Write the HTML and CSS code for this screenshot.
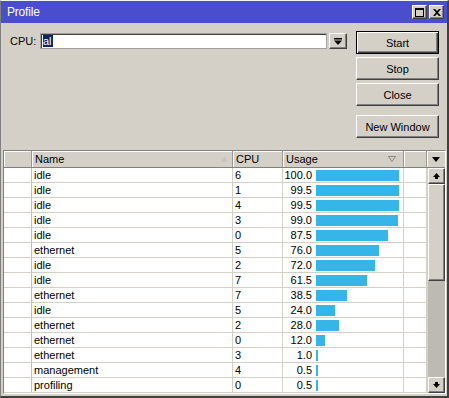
FILE: index.html
```html
<!DOCTYPE html>
<html>
<head>
<meta charset="utf-8">
<title>Profile</title>
<link rel="stylesheet" href="styles.css">
</head>
<body>
<div class="window">
  <div class="titlebar">
    <span class="title">Profile</span>
    <div class="tbtns">
      <span class="tbtn"><svg width="9" height="9" viewBox="0 0 9 9"><rect x="0.5" y="0.5" width="8" height="8" fill="none" stroke="#000" stroke-width="1"/><rect x="0" y="0" width="9" height="2" fill="#000"/></svg></span>
      <span class="tbtn"><svg width="8" height="7" viewBox="0 0 8 7"><path d="M0 0h2l2 2 2-2h2L5 3.5 8 7H6L4 5 2 7H0l3-3.5z" fill="#000"/></svg></span>
    </div>
  </div>
  <div class="content">
    <div class="top">
      <div class="cpu-row">
        <label class="cpu-label">CPU:</label>
        <div class="input"><span class="sel">al</span></div>
        <span class="drop"><svg width="8" height="7" viewBox="0 0 8 7"><rect x="0" y="0" width="8" height="1.5" fill="#000"/><path d="M0 2.5h8L4 7z" fill="#000"/></svg></span>
      </div>
      <div class="buttons">
        <span class="btn default">Start</span>
        <span class="btn">Stop</span>
        <span class="btn">Close</span>
        <span class="btn gap">New Window</span>
      </div>
    </div>
    <div class="table">
      <div class="thead">
        <span class="th c0"></span>
        <span class="th c1">Name<svg class="sort up" width="7" height="5" viewBox="0 0 7 5"><path d="M0 5L3.5 0 7 5z" fill="#c8c4bc"/></svg></span>
        <span class="th c2">CPU</span>
        <span class="th c3">Usage<svg class="sort dn" width="8" height="6" viewBox="0 0 8 6"><path d="M0.5 0.5h7L4 5.5z" fill="none" stroke="#8a8780" stroke-width="1"/></svg></span>
        <span class="th c4"></span>
        <span class="th menu"><svg width="8" height="5" viewBox="0 0 8 5"><path d="M0 0h8L4 5z" fill="#000"/></svg></span>
      </div>
      <div class="tbody">
        <div class="rows">
          <div class="row"><span class="td c0"></span><span class="td c1">idle</span><span class="td c2">6</span><span class="td c3"><span class="num">100.0</span><span class="bar" style="width:83px"></span></span><span class="td c4"></span></div>
          <div class="row"><span class="td c0"></span><span class="td c1">idle</span><span class="td c2">1</span><span class="td c3"><span class="num">99.5</span><span class="bar" style="width:83px"></span></span><span class="td c4"></span></div>
          <div class="row"><span class="td c0"></span><span class="td c1">idle</span><span class="td c2">4</span><span class="td c3"><span class="num">99.5</span><span class="bar" style="width:83px"></span></span><span class="td c4"></span></div>
          <div class="row"><span class="td c0"></span><span class="td c1">idle</span><span class="td c2">3</span><span class="td c3"><span class="num">99.0</span><span class="bar" style="width:82px"></span></span><span class="td c4"></span></div>
          <div class="row"><span class="td c0"></span><span class="td c1">idle</span><span class="td c2">0</span><span class="td c3"><span class="num">87.5</span><span class="bar" style="width:72px"></span></span><span class="td c4"></span></div>
          <div class="row"><span class="td c0"></span><span class="td c1">ethernet</span><span class="td c2">5</span><span class="td c3"><span class="num">76.0</span><span class="bar" style="width:63px"></span></span><span class="td c4"></span></div>
          <div class="row"><span class="td c0"></span><span class="td c1">idle</span><span class="td c2">2</span><span class="td c3"><span class="num">72.0</span><span class="bar" style="width:59px"></span></span><span class="td c4"></span></div>
          <div class="row"><span class="td c0"></span><span class="td c1">idle</span><span class="td c2">7</span><span class="td c3"><span class="num">61.5</span><span class="bar" style="width:51px"></span></span><span class="td c4"></span></div>
          <div class="row"><span class="td c0"></span><span class="td c1">ethernet</span><span class="td c2">7</span><span class="td c3"><span class="num">38.5</span><span class="bar" style="width:31px"></span></span><span class="td c4"></span></div>
          <div class="row"><span class="td c0"></span><span class="td c1">idle</span><span class="td c2">5</span><span class="td c3"><span class="num">24.0</span><span class="bar" style="width:19px"></span></span><span class="td c4"></span></div>
          <div class="row"><span class="td c0"></span><span class="td c1">ethernet</span><span class="td c2">2</span><span class="td c3"><span class="num">28.0</span><span class="bar" style="width:23px"></span></span><span class="td c4"></span></div>
          <div class="row"><span class="td c0"></span><span class="td c1">ethernet</span><span class="td c2">0</span><span class="td c3"><span class="num">12.0</span><span class="bar" style="width:9px"></span></span><span class="td c4"></span></div>
          <div class="row"><span class="td c0"></span><span class="td c1">ethernet</span><span class="td c2">3</span><span class="td c3"><span class="num">1.0</span><span class="bar" style="width:2px"></span></span><span class="td c4"></span></div>
          <div class="row"><span class="td c0"></span><span class="td c1">management</span><span class="td c2">4</span><span class="td c3"><span class="num">0.5</span><span class="bar" style="width:2px"></span></span><span class="td c4"></span></div>
          <div class="row"><span class="td c0"></span><span class="td c1">profiling</span><span class="td c2">0</span><span class="td c3"><span class="num">0.5</span><span class="bar" style="width:2px"></span></span><span class="td c4"></span></div>
        </div>
        <div class="vscroll">
          <span class="sbtn"><svg width="7" height="6" viewBox="0 0 7 6"><path d="M0 4L3.5 0 7 4H5v2H2V4z" fill="#000"/></svg></span>
          <span class="thumb"></span>
          <span class="track"></span>
          <span class="sbtn"><svg width="7" height="6" viewBox="0 0 7 6"><path d="M2 0h3v2h2L3.5 6 0 2h2z" fill="#000"/></svg></span>
        </div>
      </div>
    </div>
  </div>
</div>
</body>
</html>
```
FILE: styles.css
```css
* { box-sizing: border-box; }
html, body { margin: 0; padding: 0; }
body {
  width: 449px;
  height: 398px;
  overflow: hidden;
  background: #d4d0c8;
  font-family: "Liberation Sans", Arial, sans-serif;
  font-size: 11px;
  color: #000;
}
.window {
  width: 449px;
  height: 398px;
  background: #d4d0c8;
  border-style: solid;
  border-width: 1px 2px 2px 1px;
  border-color: #f4f4f4 #404040 #404040 #808080;
  display: flex;
  flex-direction: column;
}
.titlebar {
  height: 22px;
  background: #4a4ecc;
  display: flex;
  align-items: center;
  justify-content: space-between;
  padding: 0 3px 0 6px;
}
.title {
  color: #fff;
  font-size: 12px;
  letter-spacing: -0.2px;
}
.tbtns { display: flex; gap: 2px; }
.tbtn {
  width: 15px;
  height: 14px;
  background: #d4d0c8;
  border: 1px solid;
  border-color: #fff #404040 #404040 #fff;
  box-shadow: inset -1px -1px #808080;
  display: flex;
  align-items: center;
  justify-content: center;
}
.content {
  flex: 1;
  display: flex;
  flex-direction: column;
}
.top {
  height: 127px;
  display: flex;
  align-items: flex-start;
  padding: 8px 0 0 8px;
}
.cpu-row {
  display: flex;
  align-items: center;
  margin-top: 2px;
}
.cpu-label {
  width: 31px;
  font-size: 11px;
  padding-left: 1px;
}
.input {
  width: 287px;
  height: 16px;
  background: #fff;
  border: 1px solid;
  border-color: #808080 #d4d0c8 #d4d0c8 #808080;
  box-shadow: inset 1px 1px #404040;
  outline: 1px solid #a0a0a0;
  outline-offset: -1px;
  padding: 1px 0 0 2px;
  line-height: 13px;
}
.sel {
  background: #0a246a;
  color: #fff;
  padding: 0 1px 0 0;
}
.drop {
  width: 18px;
  height: 16px;
  margin-left: 2px;
  background: #d4d0c8;
  border: 1px solid;
  border-color: #fff #404040 #404040 #fff;
  box-shadow: inset -1px -1px #808080;
  display: flex;
  align-items: center;
  justify-content: center;
}
.buttons {
  margin-left: 9px;
  display: flex;
  flex-direction: column;
  gap: 3px;
}
.btn {
  width: 83px;
  height: 23px;
  display: flex;
  align-items: center;
  justify-content: center;
  border: 1px solid;
  border-color: #fff #404040 #404040 #fff;
  box-shadow: inset -1px -1px #808080;
  font-size: 11px;
}
.btn.default {
  border: 1px solid #000;
  box-shadow: inset 1px 1px #fff, inset -1px -1px #404040, inset -2px -2px #808080;
}
.btn.gap { margin-top: 6px; }
.table {
  margin-left: 2px;
  width: 443px;
  height: 244px;
  border: 1px solid;
  border-color: #808080 #fff #fff #808080;
  display: flex;
  flex-direction: column;
}
.thead {
  display: flex;
  height: 17px;
  border-bottom: 1px solid #808080;
}
.th {
  height: 16px;
  border-right: 1px solid #9a978f;
  box-shadow: inset 1px 1px #fff;
  padding-left: 3px;
  line-height: 16px;
  display: flex;
  align-items: center;
  justify-content: space-between;
}
.th.c1 .sort { margin-right: 4px; }
.th.c3 .sort { margin-right: 7px; }
.c0 { width: 28px; }
.c1 { width: 201px; }
.c2 { width: 50px; }
.c3 { width: 121px; }
.c4 { width: 23px; }
.th.menu {
  width: 18px;
  border-right: none;
  justify-content: center;
  padding-left: 0;
}
.tbody {
  flex: 1;
  display: flex;
}
.rows {
  width: 423px;
  background: #fff;
}
.row {
  display: flex;
  height: 15px;
}
.td {
  height: 15px;
  border-right: 1px solid #d4d0c8;
  border-bottom: 1px solid #d4d0c8;
  padding-left: 2px;
  line-height: 14px;
  white-space: nowrap;
}
.td.c0 { border-right-color: #c0c0c0; }
.td.c3 {
  display: flex;
  align-items: flex-start;
  padding-left: 0;
}
.num {
  width: 29px;
  text-align: right;
}
.bar {
  height: 11px;
  margin-top: 2px;
  margin-left: 4px;
  background: #35b5e8;
}
.vscroll {
  width: 18px;
  display: flex;
  flex-direction: column;
  background: #d4d0c8;
  padding-left: 1px;
}
.sbtn {
  height: 16px;
  background: #d4d0c8;
  border: 1px solid;
  border-color: #fff #404040 #404040 #fff;
  box-shadow: inset -1px -1px #808080;
  display: flex;
  align-items: center;
  justify-content: center;
}
.thumb {
  height: 97px;
  background: #d4d0c8;
  border: 1px solid;
  border-color: #fff #404040 #404040 #fff;
  box-shadow: inset -1px -1px #808080;
}
.track {
  flex: 1;
  background: #bdbab3;
}
```
